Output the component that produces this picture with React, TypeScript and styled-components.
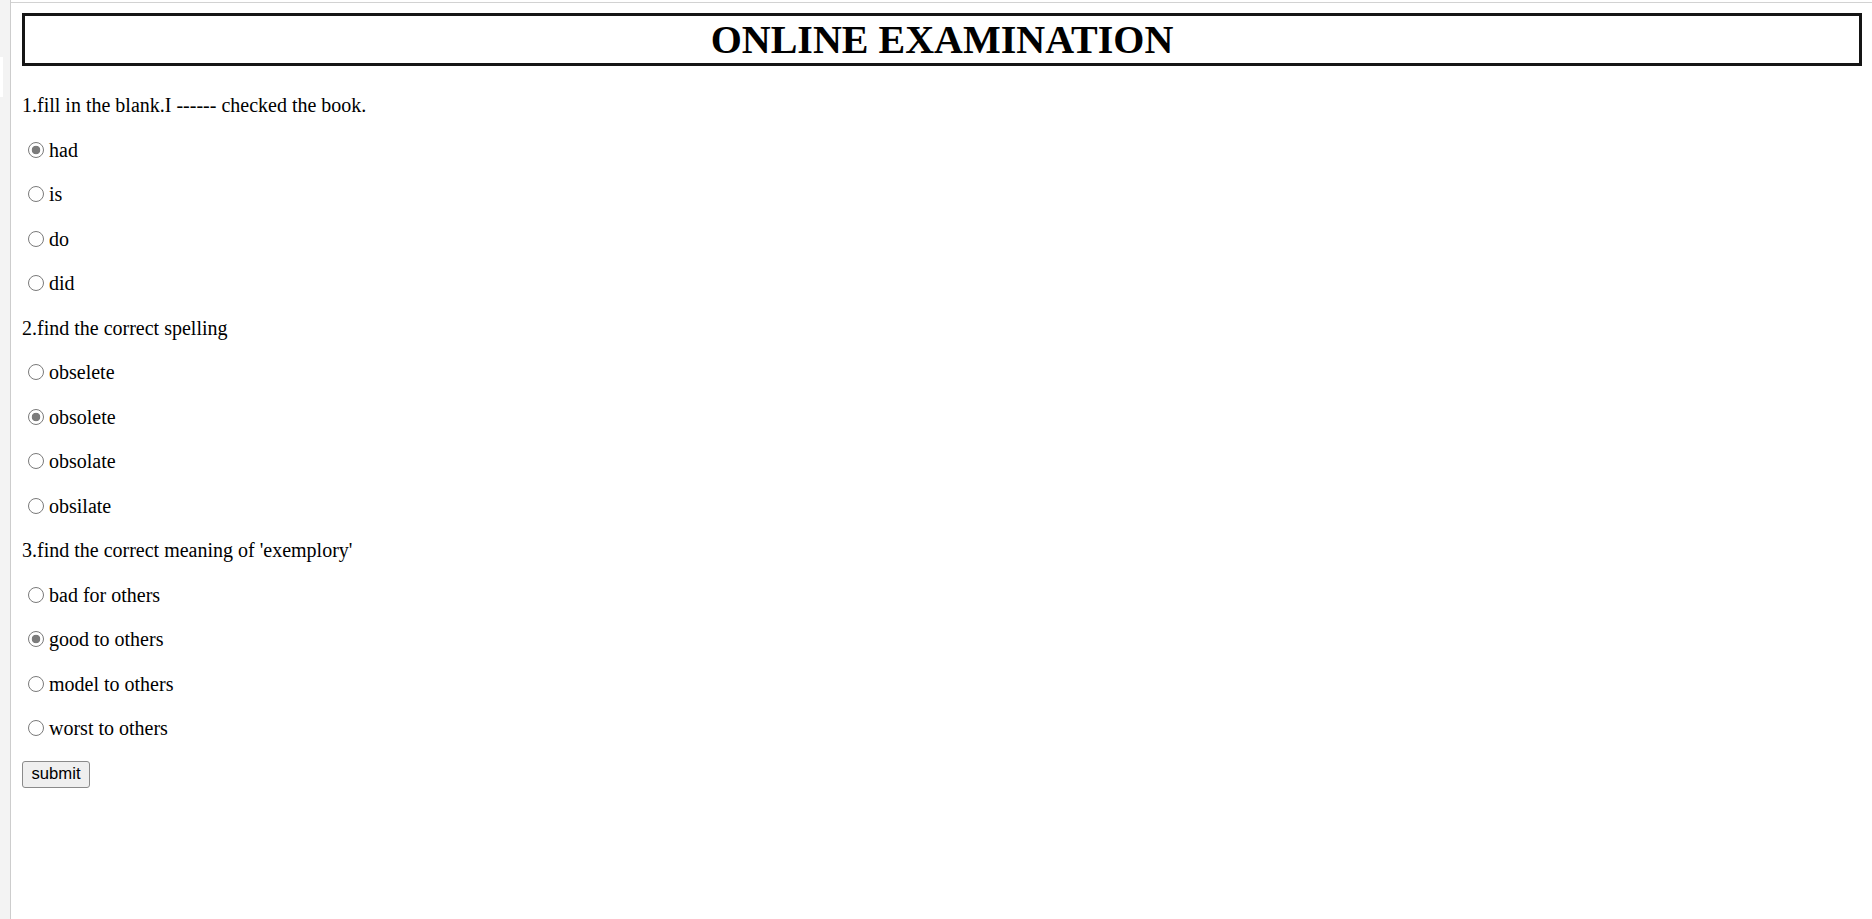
import React, { useState } from 'react';
import styled, { createGlobalStyle } from 'styled-components';

const GlobalStyle = createGlobalStyle`
  html, body {
    margin: 0;
    padding: 0;
    background: #ffffff;
  }
`;

const Shell = styled.div`
  display: flex;
  min-height: 100vh;
`;

const Gutter = styled.div`
  width: 11px;
  flex-shrink: 0;
  background: #f3f3f3;
  border-right: 1px solid #cdcdcd;
  padding-top: 57px;
  box-sizing: border-box;
`;

const GutterTab = styled.div`
  width: 3px;
  height: 40px;
  background: #ffffff;
`;

const Main = styled.main`
  flex: 1;
  margin-top: 2px;
  border-top: 1px solid #d2d2d2;
  padding: 10px 10px 10px 11px;
  font-family: 'Liberation Serif', 'Times New Roman', serif;
  font-size: 20px;
  color: #000;
`;

const Title = styled.h1`
  margin: 0 0 27px;
  border: 3px solid #151515;
  font-size: 40px;
  font-weight: bold;
  line-height: 47px;
  text-align: center;
`;

const Form = styled.form`
  display: flex;
  flex-direction: column;
  align-items: flex-start;
  gap: 20px;
`;

const Line = styled.div`
  line-height: 24.5px;
  white-space: nowrap;
`;

const Option = styled.label`
  display: block;
  line-height: 24.5px;
  white-space: nowrap;
`;

const Radio = styled.input.attrs({ type: 'radio' })`
  appearance: none;
  -webkit-appearance: none;
  display: inline-block;
  width: 16px;
  height: 16px;
  margin: 0 5px 0 6px;
  box-sizing: border-box;
  border: 1px solid #7a7a7a;
  border-radius: 50%;
  background: #fff;
  vertical-align: -1px;

  &:checked {
    background: radial-gradient(circle, #7c7c7c 0 4px, #fff 4.6px);
  }
`;

const SubmitButton = styled.button`
  height: 27px;
  padding: 0 8.5px;
  font-family: 'Liberation Sans', Arial, sans-serif;
  font-size: 16.67px;
  color: #000;
  background: #efefef;
  border: 1px solid #8a8a8a;
  border-radius: 3px;
`;

type Question = {
  text: string;
  options: string[];
  picked: number;
};

const questions: Question[] = [
  {
    text: '1.fill in the blank.I ------ checked the book.',
    options: ['had', 'is', 'do', 'did'],
    picked: 0,
  },
  {
    text: '2.find the correct spelling',
    options: ['obselete', 'obsolete', 'obsolate', 'obsilate'],
    picked: 1,
  },
  {
    text: "3.find the correct meaning of 'exemplory'",
    options: ['bad for others', 'good to others', 'model to others', 'worst to others'],
    picked: 1,
  },
];

export default function App() {
  const [answers, setAnswers] = useState<number[]>(questions.map((q) => q.picked));

  return (
    <Shell>
      <GlobalStyle />
      <Gutter>
        <GutterTab />
      </Gutter>
      <Main>
        <Title>ONLINE EXAMINATION</Title>
        <Form onSubmit={(e) => e.preventDefault()}>
          {questions.map((q, qi) => (
            <React.Fragment key={q.text}>
              <Line>{q.text}</Line>
              {q.options.map((opt, oi) => (
                <Option key={opt}>
                  <Radio
                    name={`q${qi}`}
                    checked={answers[qi] === oi}
                    onChange={() =>
                      setAnswers((prev) => prev.map((a, i) => (i === qi ? oi : a)))
                    }
                  />
                  {opt}
                </Option>
              ))}
            </React.Fragment>
          ))}
          <SubmitButton type="submit">submit</SubmitButton>
        </Form>
      </Main>
    </Shell>
  );
}
